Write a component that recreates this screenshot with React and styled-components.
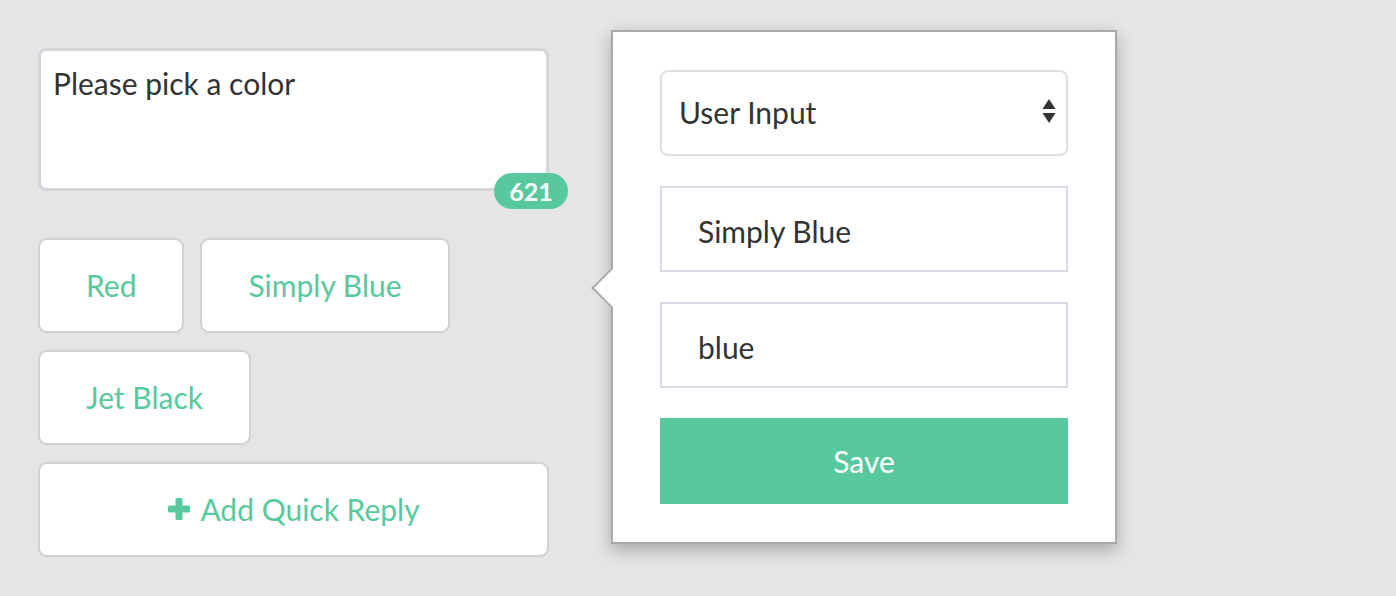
import React from "react";
import styled, { createGlobalStyle } from "styled-components";

const GREEN = "#58c99e";

const Global = createGlobalStyle`
  html, body { margin: 0; padding: 0; background: #e5e5e5; }
  body { font-family: Lato, "Open Sans", sans-serif; }
  * { box-sizing: border-box; }
`;

const Page = styled.div`
  display: flex;
  align-items: flex-start;
  gap: 62px;
  padding: 30px 0 0 38px;
  min-height: 596px;
`;

const LeftColumn = styled.div`
  width: 511px;
  margin-top: 18px;
  display: flex;
  flex-direction: column;
`;

const TextBoxWrap = styled.div`
  position: relative;
`;

const TextBox = styled.div`
  height: 143px;
  background: #fff;
  border: 3px solid #d4d5db;
  border-radius: 8px;
  padding: 14px 12px;
  font-size: 30px;
  line-height: 36px;
  color: #333;
`;

const Counter = styled.span`
  position: absolute;
  right: -19px;
  bottom: -18px;
  width: 74px;
  height: 36px;
  border-radius: 18px;
  background: ${GREEN};
  color: #fff;
  font-weight: 700;
  font-size: 25px;
  display: flex;
  align-items: center;
  justify-content: center;
`;

const Replies = styled.div`
  margin-top: 47px;
  display: flex;
  flex-wrap: wrap;
  gap: 17px 16px;
`;

const ReplyButton = styled.button`
  height: 95px;
  padding: 0 46px 2px;
  flex: ${(p) => (p.$wide ? "0 0 100%" : "0 0 auto")};
  background: #fff;
  border: 2px solid #d0d0d0;
  border-radius: 9px;
  color: ${GREEN};
  font-family: Lato, sans-serif;
  font-size: 30px;
  display: flex;
  align-items: center;
  justify-content: center;
  gap: 9px;
  cursor: pointer;
`;

const Popover = styled.div`
  position: relative;
  width: 506px;
  background: #fff;
  border: 2px solid #a9a9a9;
  padding: 38px 47px;
  box-shadow: 0 6px 16px rgba(0, 0, 0, 0.28);
  display: flex;
  flex-direction: column;
  gap: 30px;
`;

const Arrow = styled.span`
  position: absolute;
  left: -16px;
  top: 242px;
  width: 28px;
  height: 28px;
  background: #fff;
  border-left: 2px solid #a9a9a9;
  border-bottom: 2px solid #a9a9a9;
  transform: rotate(45deg);
`;

const Field = styled.div`
  height: 86px;
  display: flex;
  align-items: center;
  background: #fff;
  border: 2px solid ${(p) => (p.$select ? "#dde0e6" : "#d5dae3")};
  border-radius: ${(p) => (p.$select ? "8px" : "0")};
  padding: ${(p) => (p.$select ? "0 10px 2px 17px" : "4px 36px 0")};
  font-size: 30px;
  color: #333;
  justify-content: space-between;
`;

const SaveButton = styled.button`
  height: 86px;
  border: none;
  background: ${GREEN};
  color: #fff;
  font-family: Lato, sans-serif;
  font-size: 30px;
  cursor: pointer;
`;

const SelectArrows = () => (
  <svg width="14" height="26" viewBox="0 0 14 26" aria-hidden="true">
    <path d="M7 0 L13.5 10 L0.5 10 Z" fill="#333" />
    <path d="M0.5 14 L13.5 14 L7 24 Z" fill="#333" />
  </svg>
);

const PlusIcon = () => (
  <svg width="24" height="24" viewBox="0 0 24 24" aria-hidden="true">
    <rect x="8.5" y="1" width="7" height="22" rx="1.5" fill={GREEN} />
    <rect x="1" y="8.5" width="22" height="7" rx="1.5" fill={GREEN} />
  </svg>
);

export default function App() {
  return (
    <>
      <Global />
      <Page>
        <LeftColumn>
          <TextBoxWrap>
            <TextBox>Please pick a color</TextBox>
            <Counter>621</Counter>
          </TextBoxWrap>
          <Replies>
            <ReplyButton>Red</ReplyButton>
            <ReplyButton>Simply Blue</ReplyButton>
            <ReplyButton>Jet Black</ReplyButton>
            <ReplyButton $wide>
              <PlusIcon />
              Add Quick Reply
            </ReplyButton>
          </Replies>
        </LeftColumn>
        <Popover>
          <Arrow />
          <Field $select>
            <span>User Input</span>
            <SelectArrows />
          </Field>
          <Field>Simply Blue</Field>
          <Field>blue</Field>
          <SaveButton>Save</SaveButton>
        </Popover>
      </Page>
    </>
  );
}
